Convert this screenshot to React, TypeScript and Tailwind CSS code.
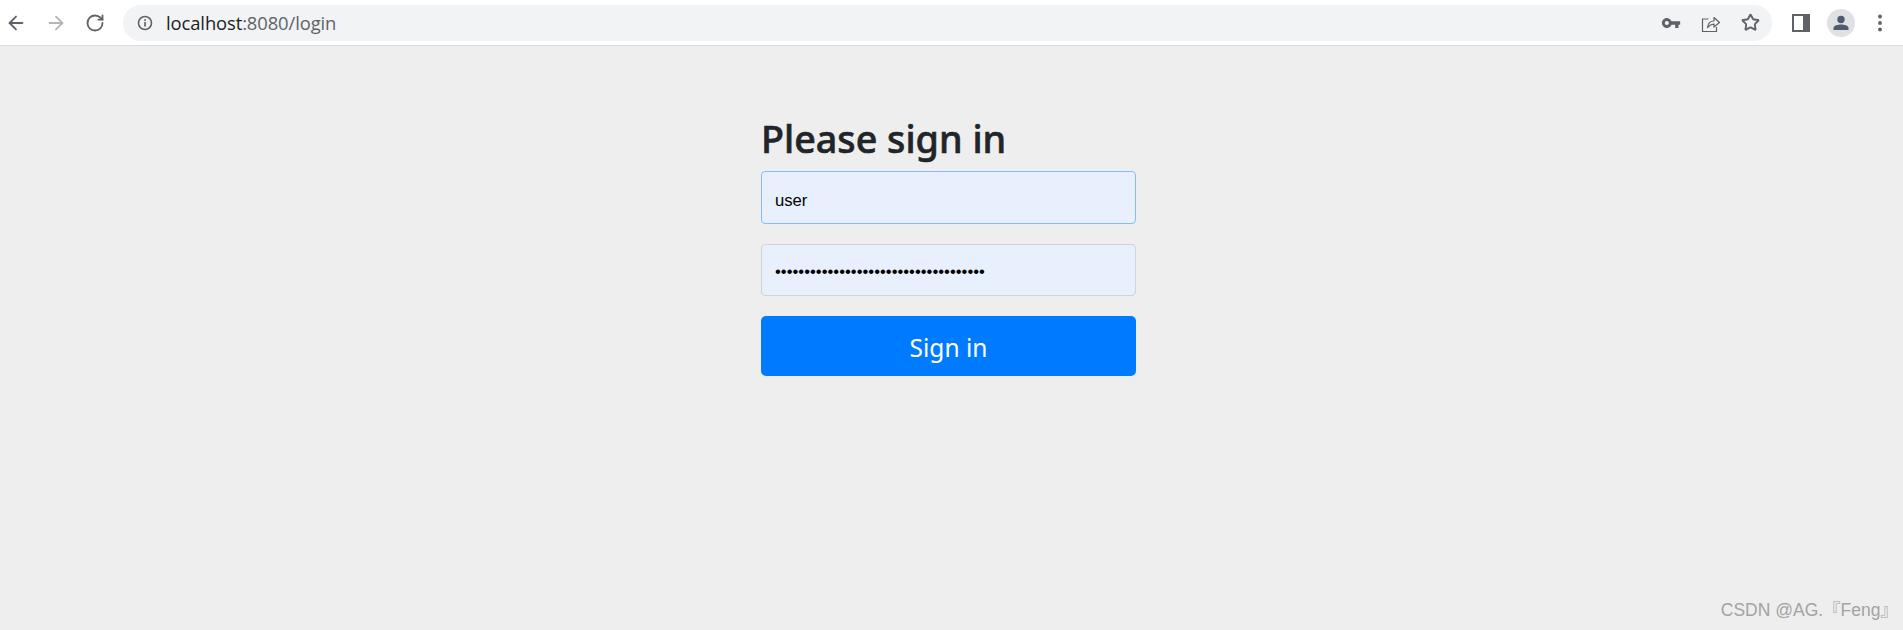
import React from "react";
import { ArrowLeft, ArrowRight, RotateCw, Star } from "lucide-react";

function Key() {
  return (
    <svg width="20" height="20" viewBox="0 0 24 24" fill="#5f6368">
      <path d="M12.65 10A6 6 0 1 0 12.65 14H17v4h4v-4h2v-4H12.65ZM7 14.5a2.5 2.5 0 1 1 0-5 2.5 2.5 0 0 1 0 5Z" />
    </svg>
  );
}

function Share() {
  return (
    <svg width="20" height="20" viewBox="0 0 20 20" fill="none" stroke="#5f6368" strokeWidth="1.2" strokeLinejoin="round">
      <path d="M7.5 6H1.5V18.5H15.5V14" />
      <path d="M6.5 14.5C7 10.5 9.5 8 13 8V4.5L18.5 9.5L13 14V11.2C10.5 11 8.5 12.2 6.5 14.5Z" />
    </svg>
  );
}

function SidePanel() {
  return (
    <svg width="18" height="18" viewBox="0 0 18 18">
      <path fillRule="evenodd" fill="#5f6368" d="M0 0H18V18H0ZM2 2V16H11V2Z" />
    </svg>
  );
}

function Avatar() {
  return (
    <div className="flex h-7 w-7 items-center justify-center rounded-full bg-[#dfe1e5]">
      <svg width="18" height="18" viewBox="0 0 18 18" fill="#4f5b6e">
        <circle cx="9" cy="5.5" r="3.7" />
        <path d="M1.5 16V14C1.5 11.5 6 10.5 9 10.5S16.5 11.5 16.5 14V16Z" />
      </svg>
    </div>
  );
}

function Kebab() {
  return (
    <svg width="6" height="18" viewBox="0 0 6 18" fill="#5f6368">
      <circle cx="3" cy="2.5" r="1.9" />
      <circle cx="3" cy="9" r="1.9" />
      <circle cx="3" cy="15.5" r="1.9" />
    </svg>
  );
}

function Info() {
  return (
    <svg width="16" height="16" viewBox="0 0 16 16" fill="none">
      <circle cx="8" cy="8" r="6.5" stroke="#5f6368" strokeWidth="1.6" />
      <rect x="7.2" y="7" width="1.7" height="4.5" fill="#5f6368" />
      <rect x="7.2" y="4.2" width="1.7" height="1.7" fill="#5f6368" />
    </svg>
  );
}

export default function App() {
  return (
    <div className="flex h-[630px] flex-col bg-[#eeeeee] font-['Noto_Sans',sans-serif]">
      <header className="flex h-[46px] shrink-0 items-center border-b border-[#dadce0] bg-white">
        <div className="ml-[5px] flex w-[110px] items-center gap-[18px]">
          <ArrowLeft size={22} color="#5f6368" strokeWidth={2} />
          <ArrowRight size={22} color="#b4b6b9" strokeWidth={2} />
          <RotateCw size={20} color="#5f6368" strokeWidth={2.2} />
        </div>
        <div className="ml-[8px] flex h-[36px] w-[1649px] items-center rounded-full bg-[#f1f3f4]">
          <div className="ml-[14px]">
            <Info />
          </div>
          <div className="ml-[13px] font-['Open_Sans',sans-serif] text-[18.4px] tracking-[-0.1px] text-[#5f6368]">
            <span className="text-[#202124]">localhost</span>:8080/login
          </div>
          <div className="ml-auto mr-[12px] flex items-center gap-[20px]">
            <Key />
            <Share />
            <Star size={19} color="#5f6368" strokeWidth={2.4} />
          </div>
        </div>
        <div className="ml-[20px]">
          <SidePanel />
        </div>
        <div className="ml-[17px]">
          <Avatar />
        </div>
        <div className="ml-[22px]">
          <Kebab />
        </div>
      </header>

      <main className="relative flex-1">
        <form className="ml-[761px] flex w-[375px] flex-col pt-[69px]">
          <h2 className="mb-[8px] font-['Noto_Sans',sans-serif] text-[37.7px] leading-[48px] font-medium text-[#212529] [-webkit-text-stroke:0.6px_#212529]">
            Please sign in
          </h2>
          <input
            readOnly
            value="user"
            className="h-[53px] w-full rounded-[4px] border border-[#80bdff] bg-[#e8f0fe] px-[13px] pt-[6px] font-['Liberation_Sans',sans-serif] text-[16.67px] text-black outline-none"
          />
          <input
            readOnly
            type="password"
            value="oooooooooooooooooooooooooooooooooooo"
            className="mt-[20px] h-[52px] w-full rounded-[4px] border border-[#ced4da] bg-[#e8f0fe] px-[13px] pt-[4px] font-['Liberation_Sans',sans-serif] text-[16.67px] text-black outline-none"
          />
          <button
            type="button"
            className="mt-[20px] h-[60px] w-full rounded-[5px] bg-[#007bff] pt-[4px] text-[24.5px] text-white"
          >
            Sign in
          </button>
        </form>
        <div className="absolute right-[5px] bottom-[7px] font-['Liberation_Sans','Noto_Sans_CJK_SC',sans-serif] text-[17.5px] text-[#a3a3a3]">
          CSDN @AG.『Feng』
        </div>
      </main>
    </div>
  );
}
